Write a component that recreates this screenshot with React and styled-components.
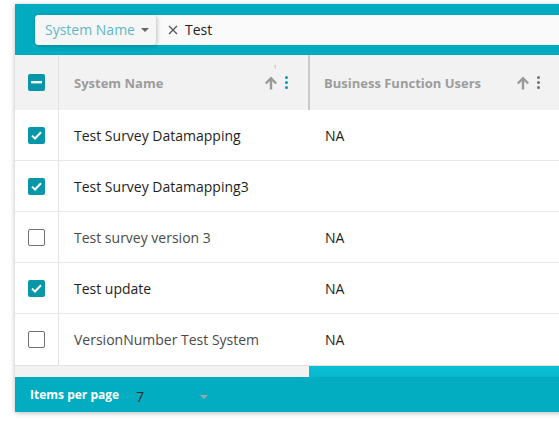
import React from "react";
import styled, { createGlobalStyle } from "styled-components";

const Global = createGlobalStyle`
  html, body { margin: 0; padding: 0; background: #fff; overflow: hidden; }
  body { font-family: "Open Sans", "Noto Sans", sans-serif; }
`;

const Page = styled.div`
  padding: 4px 0 0 15px;
  width: 559px;
  height: 426px;
  box-sizing: border-box;
  overflow: hidden;
`;

const Card = styled.div`
  width: 560px;
  background: #fff;
  box-shadow: 0 1px 5px rgba(0, 0, 0, 0.28);
  display: flex;
  flex-direction: column;
`;

const FilterBar = styled.div`
  height: 51px;
  background: #02acc0;
  display: flex;
  align-items: center;
  padding-left: 20px;
  box-sizing: border-box;
`;

const FilterBox = styled.div`
  flex: 1;
  height: 30px;
  display: flex;
  background: #fafafa;
  border-radius: 4px 0 0 4px;
`;

const FieldSelect = styled.div`
  width: 121px;
  display: flex;
  align-items: center;
  gap: 6px;
  padding-left: 10px;
  box-sizing: border-box;
  background: #f6f6f6;
  border-radius: 4px;
  box-shadow: 1px 1px 4px rgba(0, 0, 0, 0.25);
  color: #5db8c9;
  font-size: 14px;
`;

const Caret = styled.span`
  width: 0;
  height: 0;
  border-left: 4px solid transparent;
  border-right: 4px solid transparent;
  border-top: 4px solid ${(p) => p.$color || "#666"};
`;

const FilterValue = styled.div`
  display: flex;
  align-items: center;
  gap: 7px;
  padding-left: 12px;
  font-size: 14px;
  color: #222;
`;

const Table = styled.div`
  display: flex;
  flex-direction: column;
`;

const HeaderRow = styled.div`
  display: grid;
  grid-template-columns: 44px 249px 2px 250px;
  height: 55px;
  background: #f2f2f2;
`;

const Row = styled.div`
  display: grid;
  grid-template-columns: 44px 251px 250px;
  height: 51px;
  border-bottom: 1px solid #e8e8e8;
  box-sizing: border-box;
  &:last-child { border-bottom: none; }
`;

const CheckCell = styled.div`
  display: flex;
  align-items: center;
  justify-content: center;
  border-right: 1px solid #e4e4e4;
  box-sizing: border-box;
  padding-right: 1px;
`;

const HeadCell = styled.div`
  display: flex;
  align-items: center;
  padding-left: ${(p) => p.$pad || 15}px;
  padding-right: 20px;
  font-size: 13px;
  font-weight: 700;
  color: #9c9c9c;
  box-sizing: border-box;
`;

const HeadLabel = styled.span`
  flex: 1;
`;

const Divider = styled.div`
  background: #c9c9c9;
`;

const Icons = styled.div`
  display: flex;
  align-items: center;
  gap: 7px;
  position: relative;
`;

const SortBadge = styled.span`
  position: absolute;
  left: 10px;
  top: -13px;
  font-size: 6px;
  color: #aaa;
  font-weight: 400;
`;

const Dots = styled.div`
  display: flex;
  flex-direction: column;
  gap: 1.5px;
  span {
    width: 3.5px;
    height: 3.5px;
    border-radius: 50%;
    background: ${(p) => p.$color};
  }
`;

const Cell = styled.div`
  display: flex;
  align-items: center;
  padding-left: 15px;
  font-size: 14px;
  color: ${(p) => (p.$dim ? "#4a4a4a" : "#1e1e1e")};
`;

const Box = styled.div`
  width: 17px;
  height: 17px;
  box-sizing: border-box;
  border-radius: 2px;
  display: flex;
  align-items: center;
  justify-content: center;
  background: ${(p) => (p.$on ? "#0897a9" : "#fff")};
  border: ${(p) => (p.$on ? "none" : "1.5px solid #6f6f6f")};
`;

const ScrollTrack = styled.div`
  height: 12px;
  display: flex;
  background: #f2f2f2;
  border-top: 1px solid #e2e2e2;
  box-sizing: border-box;
`;

const ScrollThumb = styled.div`
  margin-left: 294px;
  flex: 1;
  background: linear-gradient(#0bc0d7, #07b8ce);
`;

const Footer = styled.div`
  height: 35px;
  background: #02adc1;
  display: flex;
  align-items: center;
  padding-left: 15px;
  box-sizing: border-box;
`;

const FooterLabel = styled.span`
  color: #fff;
  font-weight: 700;
  font-size: 12px;
  width: 106px;
`;

const PageSize = styled.div`
  display: flex;
  align-items: center;
  width: 72px;
  justify-content: space-between;
  padding-top: 4px;
  font-size: 14px;
  color: #2a2a2a;
`;

const Arrow = () => (
  <svg width="14" height="14" viewBox="0 0 14 14">
    <path d="M7 13.5V2.5M1.8 7.5L7 2.3L12.2 7.5" fill="none" stroke="#9a9a9a" strokeWidth="2.4" />
  </svg>
);

const Kebab = ({ color }) => (
  <Dots $color={color}>
    <span />
    <span />
    <span />
  </Dots>
);

const Check = () => (
  <svg width="11" height="9" viewBox="0 0 11 9">
    <path d="M1 4.6L4 7.5L10 1.3" fill="none" stroke="#fff" strokeWidth="2" />
  </svg>
);

const Checkbox = ({ on }) => <Box $on={on}>{on && <Check />}</Box>;

const Indeterminate = () => (
  <Box $on>
    <svg width="11" height="3" viewBox="0 0 11 3">
      <rect x="0" y="0" width="11" height="2.4" fill="#fff" />
    </svg>
  </Box>
);

const rows = [
  { name: "Test Survey Datamapping", users: "NA", on: true },
  { name: "Test Survey Datamapping3", users: "", on: true },
  { name: "Test survey version 3", users: "NA", on: false },
  { name: "Test update", users: "NA", on: true },
  { name: "VersionNumber Test System", users: "NA", on: false },
];

export default function App() {
  return (
    <>
      <Global />
      <Page>
        <Card>
          <FilterBar>
            <FilterBox>
              <FieldSelect>
                System Name <Caret $color="#666" />
              </FieldSelect>
              <FilterValue>
                <svg width="10" height="10" viewBox="0 0 10 10">
                  <path d="M1 1L9 9M9 1L1 9" stroke="#555" strokeWidth="1.3" />
                </svg>
                Test
              </FilterValue>
            </FilterBox>
          </FilterBar>
          <Table>
            <HeaderRow>
              <CheckCell>
                <Indeterminate />
              </CheckCell>
              <HeadCell>
                <HeadLabel>System Name</HeadLabel>
                <Icons>
                  <SortBadge>1</SortBadge>
                  <Arrow />
                  <Kebab color="#0c98ad" />
                </Icons>
              </HeadCell>
              <Divider />
              <HeadCell $pad={14}>
                <HeadLabel>Business Function Users</HeadLabel>
                <Icons>
                  <Arrow />
                  <Kebab color="#6e727a" />
                </Icons>
              </HeadCell>
            </HeaderRow>
            {rows.map((r) => (
              <Row key={r.name}>
                <CheckCell>
                  <Checkbox on={r.on} />
                </CheckCell>
                <Cell $dim={!r.on}>{r.name}</Cell>
                <Cell>{r.users}</Cell>
              </Row>
            ))}
          </Table>
          <ScrollTrack>
            <ScrollThumb />
          </ScrollTrack>
          <Footer>
            <FooterLabel>Items per page</FooterLabel>
            <PageSize>
              7 <Caret $color="#9aa" />
            </PageSize>
          </Footer>
        </Card>
      </Page>
    </>
  );
}
